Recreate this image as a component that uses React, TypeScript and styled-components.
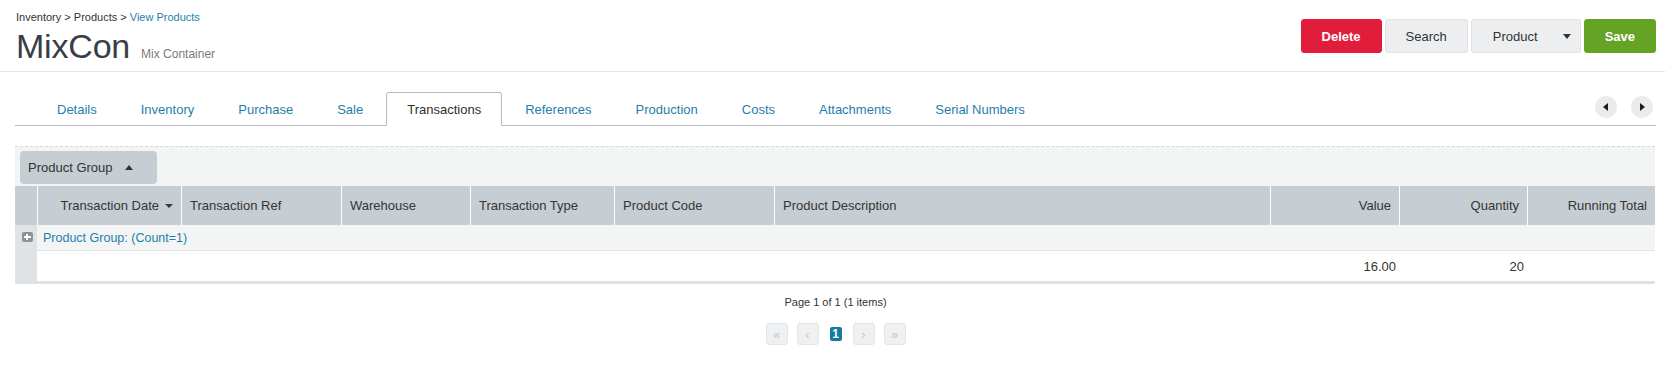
import React from 'react';
import styled, { createGlobalStyle } from 'styled-components';

const GlobalStyle = createGlobalStyle`
  html, body {
    margin: 0;
    padding: 0;
    background: #ffffff;
    font-family: "Liberation Sans", Arial, sans-serif;
    color: #333333;
  }
  * {
    box-sizing: border-box;
  }
`;

const BLUE = '#1f7eab';
const COLUMNS = '22px 144px 160px 129px 144px 160px 1fr 129px 128px 128px';

const Page = styled.div`
  width: 1665px;
`;

const Header = styled.header`
  height: 72px;
  padding: 10px 9px 0 16px;
  border-bottom: 1px solid #e1e5e7;
  display: flex;
  justify-content: space-between;
  align-items: flex-start;
`;

const TitleBlock = styled.div`
  display: flex;
  flex-direction: column;
`;

const Breadcrumb = styled.div`
  font-size: 11px;
  line-height: 14px;
  color: #333333;
`;

const Crumb = styled.span<{ current?: boolean }>`
  color: ${({ current }) => (current ? BLUE : '#333333')};
`;

const TitleRow = styled.div`
  margin-top: 2px;
  display: flex;
  align-items: baseline;
  gap: 11px;
`;

const Title = styled.h1`
  margin: 0;
  font-size: 34px;
  line-height: 40px;
  font-weight: 400;
  color: #3a3d48;
  letter-spacing: -0.2px;
`;

const Subtitle = styled.span`
  font-size: 12px;
  color: #7a7a7a;
`;

const Actions = styled.div`
  margin-top: 9px;
  display: flex;
  gap: 3px;
`;

const Button = styled.button<{ variant?: 'danger' | 'success' | 'default' }>`
  height: 34px;
  padding: 0 20px;
  border-radius: 3px;
  font-family: inherit;
  font-size: 13px;
  display: flex;
  align-items: center;
  gap: 25px;
  cursor: pointer;
  ${({ variant }) => {
    switch (variant) {
      case 'danger':
        return `
          background: #e11d3c;
          border: 1px solid #e11d3c;
          color: #ffffff;
          font-weight: 700;
        `;
      case 'success':
        return `
          background: #65a324;
          border: 1px solid #65a324;
          color: #ffffff;
          font-weight: 700;
        `;
      default:
        return `
          background: #eceef0;
          border: 1px solid #e0e3e6;
          color: #333333;
          font-weight: 400;
        `;
    }
  }}
`;

const SplitButton = styled(Button)`
  padding: 0 9px 0 21px;
`;

const Caret = styled.span<{ up?: boolean }>`
  width: 0;
  height: 0;
  border-left: 4.5px solid transparent;
  border-right: 4.5px solid transparent;
  ${({ up }) => (up ? 'border-bottom: 5px solid #333;' : 'border-top: 5px solid #333;')}
`;

const Content = styled.div`
  padding: 0 9px 0 15px;
`;

const TabBar = styled.div`
  margin-top: 20px;
  height: 34px;
  border-bottom: 1px solid #b9bcbe;
  display: flex;
  align-items: flex-end;
  justify-content: space-between;
`;

const TabList = styled.div`
  display: flex;
  padding-left: 20px;
`;

const Tab = styled.div<{ active?: boolean }>`
  height: 34px;
  margin: 0 1px -1px;
  padding: 0 20px;
  display: flex;
  align-items: center;
  font-size: 13px;
  border: 1px solid ${({ active }) => (active ? '#b9bcbe' : 'transparent')};
  border-bottom-color: ${({ active }) => (active ? '#ffffff' : 'transparent')};
  border-radius: 3px 3px 0 0;
  background: ${({ active }) => (active ? '#ffffff' : 'transparent')};
  color: ${({ active }) => (active ? '#2e2e2e' : BLUE)};
`;

const TabNav = styled.div`
  display: flex;
  gap: 14px;
  padding-right: 3px;
  margin-bottom: 7px;
`;

const NavCircle = styled.div<{ dir: 'left' | 'right' }>`
  width: 22px;
  height: 22px;
  border-radius: 50%;
  background: #e9ebed;
  display: flex;
  align-items: center;
  justify-content: center;

  &::after {
    content: '';
    width: 0;
    height: 0;
    border-top: 4px solid transparent;
    border-bottom: 4px solid transparent;
    ${({ dir }) =>
      dir === 'left'
        ? 'border-right: 5px solid #1e1e1e; margin-right: 1px;'
        : 'border-left: 5px solid #1e1e1e; margin-left: 1px;'}
  }
`;

const GridWrap = styled.div`
  margin: 20px 1px 0 0;
  border-bottom: 3px solid #dfe3e6;
`;

const GroupPanel = styled.div`
  height: 40px;
  background: #f3f5f5;
  border-top: 1px dashed #d5dadd;
  padding: 4px 0 0 5px;
`;

const GroupChip = styled.div`
  width: 137px;
  height: 33px;
  background: #c6cdd3;
  border-radius: 4px;
  padding: 0 8px;
  display: flex;
  align-items: center;
  gap: 12px;
  font-size: 13px;
  color: #333333;
`;

const Row = styled.div<{ height: number; bg: string }>`
  display: grid;
  grid-template-columns: ${COLUMNS};
  height: ${({ height }) => height}px;
  background: ${({ bg }) => bg};
`;

const HeaderCell = styled.div<{ align?: 'left' | 'right' }>`
  display: flex;
  align-items: center;
  justify-content: ${({ align }) => (align === 'right' ? 'flex-end' : 'flex-start')};
  gap: 6px;
  padding: 0 8px;
  border-left: 1px solid #ffffff;
  font-size: 13px;
  color: #353535;
  white-space: nowrap;

  &:first-child {
    border-left: none;
  }
`;

const SortArrow = styled.span`
  width: 0;
  height: 0;
  border-left: 4px solid transparent;
  border-right: 4px solid transparent;
  border-top: 4px solid #3a3a3a;
`;

const IndentCell = styled.div<{ shade: string }>`
  background: ${({ shade }) => shade};
  display: flex;
  align-items: center;
  justify-content: center;
`;

const ExpandIcon = styled.span`
  width: 11px;
  height: 10px;
  margin-left: 2px;
  margin-top: -2px;
  border-radius: 2px;
  background: #8e9295;
  position: relative;

  &::before,
  &::after {
    content: '';
    position: absolute;
    background: #ffffff;
  }
  &::before {
    left: 2px;
    right: 2px;
    top: 4px;
    height: 2px;
  }
  &::after {
    top: 2px;
    bottom: 2px;
    left: 4.5px;
    width: 2px;
  }
`;

const GroupText = styled.div`
  grid-column: 2 / -1;
  display: flex;
  align-items: center;
  padding-left: 6px;
  font-size: 12.5px;
  color: ${BLUE};
  border-bottom: 1px solid #e2e5e7;
`;

const DataCell = styled.div<{ align?: 'left' | 'right' }>`
  display: flex;
  align-items: center;
  justify-content: ${({ align }) => (align === 'right' ? 'flex-end' : 'flex-start')};
  padding: 0 3px;
  font-size: 13px;
  color: #333333;
`;

const Pager = styled.div`
  margin-top: 11px;
  display: flex;
  flex-direction: column;
  align-items: center;
  gap: 14px;
`;

const PagerInfo = styled.div`
  font-size: 11px;
  line-height: 14px;
  color: #333333;
`;

const PagerButtons = styled.div`
  display: flex;
  align-items: center;
  gap: 9px;
`;

const PagerButton = styled.div`
  width: 22px;
  height: 22px;
  border-radius: 3px;
  background: #eef0f1;
  border: 1px solid #e3e6e8;
  display: flex;
  align-items: center;
  justify-content: center;
  font-size: 13px;
  color: #c2c7cb;
`;

const PageNumber = styled.div`
  width: 12px;
  height: 14px;
  margin: 0 2px;
  border-radius: 2px;
  background: #157a9e;
  color: #ffffff;
  font-size: 12px;
  font-weight: 700;
  display: flex;
  align-items: center;
  justify-content: center;
`;

const tabs = [
  'Details',
  'Inventory',
  'Purchase',
  'Sale',
  'Transactions',
  'References',
  'Production',
  'Costs',
  'Attachments',
  'Serial Numbers',
];

const columns: { label: string; align: 'left' | 'right'; sort?: boolean }[] = [
  { label: 'Transaction Date', align: 'right', sort: true },
  { label: 'Transaction Ref', align: 'left' },
  { label: 'Warehouse', align: 'left' },
  { label: 'Transaction Type', align: 'left' },
  { label: 'Product Code', align: 'left' },
  { label: 'Product Description', align: 'left' },
  { label: 'Value', align: 'right' },
  { label: 'Quantity', align: 'right' },
  { label: 'Running Total', align: 'right' },
];

const dataRow = ['', '', '', '', '', '', '16.00', '20', ''];

export default function App() {
  return (
    <Page>
      <GlobalStyle />
      <Header>
        <TitleBlock>
          <Breadcrumb>
            <Crumb>Inventory</Crumb> &gt; <Crumb>Products</Crumb> &gt;{' '}
            <Crumb current>View Products</Crumb>
          </Breadcrumb>
          <TitleRow>
            <Title>MixCon</Title>
            <Subtitle>Mix Container</Subtitle>
          </TitleRow>
        </TitleBlock>
        <Actions>
          <Button variant="danger">Delete</Button>
          <Button>Search</Button>
          <SplitButton>
            Product
            <Caret />
          </SplitButton>
          <Button variant="success">Save</Button>
        </Actions>
      </Header>

      <Content>
        <TabBar>
          <TabList>
            {tabs.map((t) => (
              <Tab key={t} active={t === 'Transactions'}>
                {t}
              </Tab>
            ))}
          </TabList>
          <TabNav>
            <NavCircle dir="left" />
            <NavCircle dir="right" />
          </TabNav>
        </TabBar>

        <GridWrap>
          <GroupPanel>
            <GroupChip>
              Product Group
              <Caret up />
            </GroupChip>
          </GroupPanel>

          <Row height={39} bg="#c6cdd3">
            <HeaderCell />
            {columns.map((c) => (
              <HeaderCell key={c.label} align={c.align}>
                {c.label}
                {c.sort && <SortArrow />}
              </HeaderCell>
            ))}
          </Row>

          <Row height={26} bg="#f3f5f5">
            <IndentCell shade="#dfe3e6">
              <ExpandIcon />
            </IndentCell>
            <GroupText>Product Group: (Count=1)</GroupText>
          </Row>

          <Row height={30} bg="#ffffff">
            <IndentCell shade="#dfe3e6" />
            {dataRow.map((v, i) => (
              <DataCell key={i} align={columns[i].align === 'right' && i > 0 ? 'right' : 'left'}>
                {v}
              </DataCell>
            ))}
          </Row>
        </GridWrap>

        <Pager>
          <PagerInfo>Page 1 of 1 (1 items)</PagerInfo>
          <PagerButtons>
            <PagerButton>«</PagerButton>
            <PagerButton>‹</PagerButton>
            <PageNumber>1</PageNumber>
            <PagerButton>›</PagerButton>
            <PagerButton>»</PagerButton>
          </PagerButtons>
        </Pager>
      </Content>
    </Page>
  );
}
